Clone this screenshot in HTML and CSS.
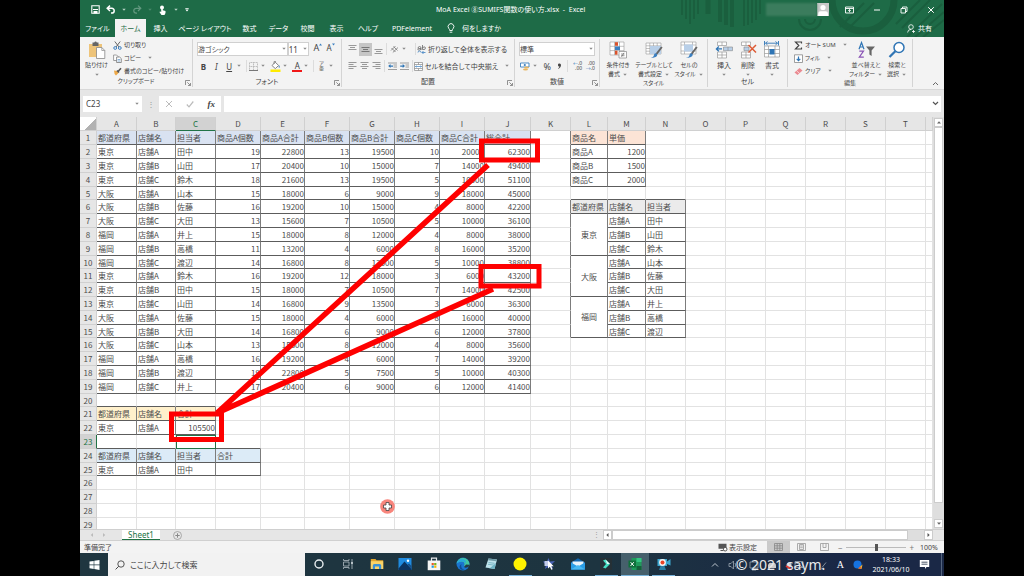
FILE: index.html
```html
<!DOCTYPE html>
<html lang="ja">
<head>
<meta charset="utf-8">
<title>MoA Excel ⑧SUMIFS関数の使い方.xlsx - Excel</title>
<link rel="stylesheet" href="styles.css">
</head>
<body>
<svg class="defs" aria-hidden="true">
  <symbol id="caret" viewBox="0 0 6 4"><path d="M1.3 .8h3.4L3 2.8z" fill="currentColor"/></symbol>
  <symbol id="launcher" viewBox="0 0 6 6"><path d="M.5 5V.5H5M2.3 2.3l3 3M5.5 3v2.5H3" fill="none" stroke="#777" stroke-width=".8"/></symbol>
</svg>
<div class="desktop">
  <div class="top">
  <svg class="pattern" viewBox="0 0 270 37" aria-hidden="true">
    <g stroke="#1a5f3e" stroke-width="2" fill="none">
      <path d="M8 0v15M12 0v19M16 0v24M20 0v19M24 0v14"/>
      <path d="M46 0v22M52 0v25M58 0v27" stroke-width="4"/><path d="M34 0v14" stroke-width="5"/>
      <path d="M70 0v26M74 0v25M78 0v23M82 0v20M86 0v14"/>
      <path d="M125 19a11 11 0 0 0 22 0M131 19a5 5 0 0 0 10 0"/>
      <path d="M158 0a31 31 0 0 0 62 0" stroke-width="7"/>
      <path d="M166 27 190 3M173 30 200 3M233 37 268 4M241 37 270 12M249 37 270 20M222 24 246 0M228 28 256 0"/>
    </g>
  </svg>
  <header class="titlebar">
    <div class="quick">
      <button aria-label="上書き保存"><svg width="9" height="9" viewBox="0 0 9 9"><path d="M.8.8h7.4v7.4H.8z" fill="none" stroke="#fff" stroke-width="1.1"/><path d="M2 4h5v1H2zM2.5 6h4v2.5h-4z" fill="#fff"/></svg></button>
      <button aria-label="元に戻す"><svg width="10" height="9" viewBox="0 0 10 9"><path d="M4 .6 1.2 3.3 4 6M1.5 3.3h4.3a2.3 2.3 0 0 1 0 4.8H5" fill="none" stroke="#fff" stroke-width="1.5"/></svg></button>
      <svg class="caret"><use href="#caret"/></svg>
      <button class="faded" aria-label="やり直し"><svg width="10" height="9" viewBox="0 0 10 9"><path d="M6 .6 8.8 3.3 6 6M8.5 3.3H4.2a2.3 2.3 0 0 0 0 4.8H5" fill="none" stroke="#fff" stroke-width="1.2"/></svg></button>
      <svg class="caret faded"><use href="#caret"/></svg>
      <button aria-label="タッチ/マウス モード"><svg width="9" height="10" viewBox="0 0 9 10"><circle cx="4" cy="2.4" r="2" fill="#fff"/><path d="M3.2 2.5h1.6v2.8l2.7.7v2L6.5 10h-3L1.4 7l.8-.6 1 .7z" fill="#fff"/></svg></button>
      <svg class="caret"><use href="#caret"/></svg>
      <button aria-label="クイック アクセス ツール バーのカスタマイズ"><svg width="6" height="6" viewBox="0 0 6 6"><path d="M1.3 1h3.4v.8H1.3zM1.3 2.6h3.4L3 4.6z" fill="#fff"/></svg></button>
    </div>
    <h1 class="doc-title">MoA Excel ⑧SUMIFS関数の使い方.xlsx&nbsp; -&nbsp; Excel</h1>
    <div class="account"><span class="account-name"></span>
      <svg width="12" height="13" viewBox="0 0 12 13"><path d="M0 0h12v13H0z" fill="#c9c9c9"/><circle cx="6" cy="4.5" r="2.6" fill="#fff"/><path d="M1 13V10.500q0-2.300 2.500-2.300h5Q11 8.200 11 10.500V13z" fill="#fff"/></svg></div>
    <div class="window-buttons">
      <button aria-label="リボンの表示オプション"><svg width="9" height="8" viewBox="0 0 9 8"><path d="M.5 1h8v6h-8zM.5 2.500h8M4.500 6.200V3.600M3.200 4.800l1.300-1.300 1.300 1.300" fill="none" stroke="#fff" stroke-width=".9"/></svg></button>
      <button aria-label="最小化"><svg width="8" height="8" viewBox="0 0 8 8"><path d="M1 4h6" stroke="#fff"/></svg></button>
      <button aria-label="元のサイズに戻す"><svg width="8" height="8" viewBox="0 0 8 8"><path d="M1 2.500h4.500V7H1zM2.500 2.500V1H7v4.500H5.500" fill="none" stroke="#fff" stroke-width=".9"/></svg></button>
      <button aria-label="閉じる"><svg width="8" height="8" viewBox="0 0 8 8"><path d="M1.200 1.200l5.600 5.600M6.800 1.200 1.200 6.800" stroke="#fff"/></svg></button>
    </div>
  </header>
  <nav class="tabs">
    <button class="tab tab-file">ファイル</button>
    <button class="tab tab-active">ホーム</button>
    <button class="tab">挿入</button>
    <button class="tab tab-layout">ページ レイアウト</button>
    <button class="tab">数式</button>
    <button class="tab">データ</button>
    <button class="tab">校閲</button>
    <button class="tab">表示</button>
    <button class="tab tab-help">ヘルプ</button>
    <button class="tab tab-pdf">PDFelement</button>
    <button class="tab tab-tell"><svg width="8" height="11" viewBox="0 0 8 11"><path d="M2.700 7.500Q2.700 6.300 1.700 5.300a2.900 2.900 0 1 1 4.600 0Q5.300 6.300 5.300 7.500zM2.700 9.200h2.600" fill="none" stroke="#fff" stroke-width=".9"/></svg>何をしますか</button>
    <button class="tab tab-share"><svg width="8" height="9" viewBox="0 0 8 9"><circle cx="4" cy="3" r="2.300" fill="none" stroke="#fff" stroke-width=".8"/><path d="M.6 8.500Q.8 5.400 4 5.400M5 7.500h3M6.500 6v3" fill="none" stroke="#fff" stroke-width=".8"/></svg>共有</button>
  </nav>
  </div>

  <section class="ribbon">
    <div class="group group-clip">
      <div class="group-body">
        <button class="big big-paste"><svg width="18" height="18" viewBox="0 0 18 18"><path d="M1 3h13v13H1z" fill="#eec47a"/><path d="M4.500 1.500h1.800a1.300 1.300 0 0 1 2.500 0h1.700V5h-6z" fill="#666"/><path d="M8.500 6.500h5.300l3 3v8H8.500z" fill="#fff" stroke="#888" stroke-width=".8"/><path d="M13.800 6.500v3h3" fill="none" stroke="#888" stroke-width=".7"/></svg><span>貼り付け</span><svg class="caret"><use href="#caret"/></svg></button>
        <div class="stack">
          <button class="line"><svg width="9" height="9" viewBox="0 0 9 9"><path d="M1.800.5 6 6M7.200.5 3 6" stroke="#666" stroke-width="1"/><circle cx="2.200" cy="7" r="1.400" fill="none" stroke="#3b7fc0"/><circle cx="6.800" cy="7" r="1.400" fill="none" stroke="#3b7fc0"/></svg>切り取り</button>
          <button class="line"><svg width="9" height="9" viewBox="0 0 9 9"><path d="M.6 1h3l1.500 1.500V6.500H.6z" fill="#fff" stroke="#888" stroke-width=".8"/><path d="M3.600 3h3L8.300 4.600V8.500H3.600z" fill="#fff" stroke="#777" stroke-width=".8"/><path d="M4.600 5.500h2.700M4.600 7h2.700" stroke="#3b7fc0" stroke-width=".6"/></svg>コピー<svg class="caret"><use href="#caret"/></svg></button>
          <button class="line"><svg width="9" height="9" viewBox="0 0 9 9"><path d="M1 3.500 4.500 4l1 2L3 8.500 1.600 7z" fill="#eda847"/><path d="M4 3.500 6 5.500M5 4.500 8 1.200" stroke="#555" stroke-width="1.600"/></svg>書式のコピー/貼り付け</button>
        </div>
      </div>
      <div class="group-label">クリップボード<svg class="launcher"><use href="#launcher"/></svg></div>
    </div>

    <div class="group group-font">
      <div class="group-body rows">
        <div class="row">
          <label class="combo combo-font"><select aria-label="フォント"><option>游ゴシック</option></select><svg class="caret"><use href="#caret"/></svg></label>
          <label class="combo combo-size"><select aria-label="フォント サイズ"><option>11</option></select><svg class="caret"><use href="#caret"/></svg></label>
          <button class="tool grow" aria-label="フォント サイズの拡大">A<svg width="3" height="3" viewBox="0 0 3 3"><path d="M0 2.500 1.500.5 3 2.500z" fill="#3b7fc0"/></svg></button>
          <button class="tool shrink" aria-label="フォント サイズの縮小">A<svg width="3" height="3" viewBox="0 0 3 3"><path d="M0 .5h3L1.500 2.500z" fill="#3b7fc0"/></svg></button>
        </div>
        <div class="row">
          <button class="tool"><b>B</b></button><button class="tool"><i>I</i></button><button class="tool"><u>U</u></button><svg class="caret"><use href="#caret"/></svg>
          <span class="sep"></span>
          <button class="tool" aria-label="罫線"><svg width="9" height="9" viewBox="0 0 9 9"><path d="M.5.5h8v8h-8zM4.500.5v8M.5 4.500h8" fill="none" stroke="#aaa" stroke-width=".8" stroke-dasharray="1 .6"/><path d="M0 8.500h9" stroke="#777"/></svg></button><svg class="caret"><use href="#caret"/></svg>
          <button class="tool" aria-label="塗りつぶしの色"><svg width="11" height="11" viewBox="0 0 11 11"><path d="M2 4.500 5.300 1.200 8.600 4.500 5.300 7.600z" fill="#fff" stroke="#777" stroke-width=".9"/><path d="M4 3V.6h2" fill="none" stroke="#777" stroke-width=".8"/><path d="M9 4q1.500 2 .3 3Q8 6.500 9 4z" fill="#3b7fc0"/><path d="M.5 8.500h10V11H.5z" fill="#ffeb00"/></svg></button><svg class="caret"><use href="#caret"/></svg>
          <button class="tool font-color">A</button><svg class="caret"><use href="#caret"/></svg>
          <span class="sep"></span>
          <button class="tool ruby"><span>ア</span><span>亜</span></button><svg class="caret"><use href="#caret"/></svg>
        </div>
      </div>
      <div class="group-label">フォント<svg class="launcher"><use href="#launcher"/></svg></div>
    </div>

    <div class="group group-align">
      <div class="group-body rows">
        <div class="row">
          <button class="tool" aria-label="上揃え"><svg width="9" height="9" viewBox="0 0 9 9"><path d="M.5 .5h8M2 2.500h5M.5 4.500h8" stroke="#999"/></svg></button>
          <button class="tool pressed" aria-label="上下中央揃え"><svg width="9" height="9" viewBox="0 0 9 9"><path d="M.5 2.500h8M2 4.500h5M.5 6.500h8" stroke="#777"/></svg></button>
          <button class="tool" aria-label="下揃え"><svg width="9" height="9" viewBox="0 0 9 9"><path d="M.5 4.500h8M2 6.500h5M.5 8.500h8" stroke="#999"/></svg></button>
          <span class="sep"></span>
          <button class="tool" aria-label="方向"><svg width="9" height="9" viewBox="0 0 9 9"><path d="M1 5.500 5.500 1M2.800 7.500 8 2.500M1.500 3l4 4M3.500 1.500l4 4" fill="none" stroke="#777" stroke-width=".8"/></svg></button><svg class="caret"><use href="#caret"/></svg>
          <span class="sep sep-wrap"></span>
          <button class="line"><svg width="9" height="9" viewBox="0 0 9 9"><path d="M1 3.500q0-2 1.500-2T4 3v2M4 3.500H2Q.9 3.600.9 4.500T2.500 5 4 4M5.500 0v4.500q3 .5 3-1.500T5.500 2.500" fill="none" stroke="#666" stroke-width=".8"/><path d="M1 7.500q0-1.500 1.500-1.500t1.500 1.500M5 7.500h3.500M6.500 6 5 7.500 6.500 9" fill="none" stroke="#3b7fc0" stroke-width=".8"/></svg>折り返して全体を表示する</button>
        </div>
        <div class="row">
          <button class="tool" aria-label="左揃え"><svg width="9" height="9" viewBox="0 0 9 9"><path d="M.5 .5h8M.5 2.500h5M.5 4.500h8M.5 6.500h5" stroke="#999"/></svg></button>
          <button class="tool" aria-label="中央揃え"><svg width="9" height="9" viewBox="0 0 9 9"><path d="M.5 .5h8M2 2.500h5M.5 4.500h8M2 6.500h5" stroke="#999"/></svg></button>
          <button class="tool" aria-label="右揃え"><svg width="9" height="9" viewBox="0 0 9 9"><path d="M.5 .5h8M3.500 2.500h5M.5 4.500h8M3.500 6.500h5" stroke="#999"/></svg></button>
          <span class="sep"></span>
          <button class="tool" aria-label="インデントを減らす"><svg width="9" height="9" viewBox="0 0 9 9"><path d="M0 1h9M5.500 3h3.500M5.500 5h3.500M0 7.500h9" stroke="#888" stroke-width=".8"/><path d="M.2 4 2.500 2v1.400H5v1.300H2.500V6z" fill="#2f75b5"/></svg></button>
          <button class="tool" aria-label="インデントを増やす"><svg width="9" height="9" viewBox="0 0 9 9"><path d="M0 1h9M5.500 3h3.500M5.500 5h3.500M0 7.500h9" stroke="#888" stroke-width=".8"/><path d="M5 4 2.700 2v1.400H.2v1.300h2.500V6z" fill="#2f75b5"/></svg></button>
          <span class="sep"></span>
          <button class="line"><svg width="9" height="9" viewBox="0 0 9 9"><path d="M.5.500h8v8h-8zM.5 2.500h8M.5 6.500h8M4.500.500v2M4.500 6.500v2" fill="#fff" stroke="#888" stroke-width=".7"/><path d="M1.500 4.500h6M2.500 3.600l-1 .9 1 .9M6.500 3.600l1 .9-1 .9" fill="none" stroke="#3b7fc0" stroke-width=".7"/></svg>セルを結合して中央揃え<svg class="caret"><use href="#caret"/></svg></button>
        </div>
      </div>
      <div class="group-label">配置<svg class="launcher"><use href="#launcher"/></svg></div>
    </div>

    <div class="group group-number">
      <div class="group-body rows">
        <div class="row">
          <label class="combo combo-number"><select aria-label="表示形式"><option>標準</option></select><svg class="caret"><use href="#caret"/></svg></label>
        </div>
        <div class="row">
          <button class="tool" aria-label="通貨表示形式"><svg width="10" height="9" viewBox="0 0 10 9"><path d="M.5 1h8.500v4H.5z" fill="#fff" stroke="#3b7fc0" stroke-width=".9"/><circle cx="4.800" cy="3" r="1.100" fill="#3b7fc0"/><ellipse cx="6.500" cy="5.500" rx="2.500" ry="1" fill="#e8b560"/><ellipse cx="5.500" cy="7.500" rx="2.500" ry="1" fill="#e8b560"/></svg></button><svg class="caret"><use href="#caret"/></svg>
          <button class="tool percent">%</button>
          <button class="tool" aria-label="桁区切りスタイル"><svg width="5" height="7" viewBox="0 0 5 7"><path d="M2.500.6a1.500 1.500 0 0 1 1.500 1.600Q4 4.800 1.500 6l-.3-.6Q2.300 4.600 2.400 3.600A1.500 1.500 0 0 1 2.500.6z" fill="#444"/></svg></button>
          <span class="sep"></span>
          <button class="tool decimal" aria-label="小数点以下の表示桁数を増やす"><span><em>←</em>.0</span><span>.00</span></button>
          <button class="tool decimal" aria-label="小数点以下の表示桁数を減らす"><span>.00</span><span><em>→</em>.0</span></button>
        </div>
      </div>
      <div class="group-label">数値<svg class="launcher"><use href="#launcher"/></svg></div>
    </div>

    <div class="group group-styles">
      <div class="group-body">
        <button class="big big-cond"><svg width="18" height="18" viewBox="0 0 18 18"><path d="M1 1h14v13H1zM1 5.300h14M1 9.600h14M5.500 1v13M10.500 1v13" fill="#fff" stroke="#999" stroke-width=".6"/><path d="M6 1.200h3v3.600H6z" fill="#d9532c"/><path d="M6 5.500h5v3.600H6z" fill="#3b7fc0"/><path d="M6 9.700h2.500v4H6z" fill="#d9532c"/><path d="M10 10.500h7.500v6.500H10z" fill="#fff" stroke="#888" stroke-width=".7"/><path d="M12 13h3.500M12 14.700h3.500M15 11.800l-2.500 4" stroke="#555" stroke-width=".6"/></svg><span>条件付き</span><span>書式 <svg class="caret"><use href="#caret"/></svg></span></button>
        <button class="big big-table"><svg width="18" height="18" viewBox="0 0 18 18"><path d="M1 2h15v11H1zM1 4.800h15M1 7.500h15M1 10.200h15M4.800 2v11M8.500 2v11M12.200 2v11" fill="#fff" stroke="#999" stroke-width=".6"/><path d="M5 5h11v8H5z" fill="#b8cfe8"/><path d="M16.800 6 11.500 13" stroke="#666" stroke-width="2"/><path d="M4.500 17q4 0 4.500-3t3.200-.8Q13 17 4.500 17z" fill="#3b7fc0"/></svg><span>テーブルとして</span><span>書式設定 <svg class="caret"><use href="#caret"/></svg></span></button>
        <button class="big big-style"><svg width="18" height="18" viewBox="0 0 18 18"><path d="M1 1h15v12H1zM1 4h15M1 10h15M4.500 1v12M12.500 1v12" fill="#fff" stroke="#999" stroke-width=".6"/><path d="M4 3.500h9v7H4z" fill="#b8cfe8"/><path d="M16.800 6 11.500 13" stroke="#666" stroke-width="2"/><path d="M5 17q4 0 4.500-3t3.200-.8Q13 17 5 17z" fill="#3b7fc0"/></svg><span>セルの</span><span>スタイル <svg class="caret"><use href="#caret"/></svg></span></button>
      </div>
      <div class="group-label">スタイル</div>
    </div>

    <div class="group group-cells">
      <div class="group-body">
        <button class="big big-cell"><svg width="18" height="18" viewBox="0 0 18 18"><path d="M2.500 1h9v3.500h-9zM7 1v3.500M2.500 11h9v6h-9zM7 11v6M2.500 14h9" fill="#fff" stroke="#999" stroke-width=".7"/><path d="M8.500 6h9v3.700h-9z" fill="#b8cfe8" stroke="#888" stroke-width=".6"/><path d="M13 6v3.700" stroke="#888" stroke-width=".6"/><path d="M7 7.900H1.500M3.800 5.500 1.400 7.900l2.400 2.400" fill="none" stroke="#2f75b5" stroke-width="1.300"/></svg><span>挿入</span><svg class="caret"><use href="#caret"/></svg></button>
        <button class="big big-cell"><svg width="18" height="18" viewBox="0 0 18 18"><path d="M2.500 1h9v3.500h-9zM7 1v3.500M2.500 11h9v6h-9zM7 11v6M2.500 14h9" fill="#fff" stroke="#999" stroke-width=".7"/><path d="M5 6h5v3.700H5z" fill="#b8cfe8" stroke="#888" stroke-width=".6"/><path d="M9.500 4l7.500 7.500M17 4l-7.500 7.500" stroke="#dd5a35" stroke-width="1.500"/></svg><span>削除</span><svg class="caret"><use href="#caret"/></svg></button>
        <button class="big big-cell"><svg width="18" height="18" viewBox="0 0 18 18"><path d="M1.500 5h15v11h-15zM1.500 8.500h15M1.500 12.500h15M5.500 5v11M12 5v11" fill="#fff" stroke="#999" stroke-width=".7"/><path d="M6.500 8h5v5.500h-5z" fill="#2f75b5"/><path d="M2.500 2.200h12M4.500.5 2.500 2.200l2 1.700M12.500.5l2 1.700-2 1.700M1.500 0v4.500M15.500 0v4.500" fill="none" stroke="#2f75b5" stroke-width=".9"/></svg><span>書式</span><svg class="caret"><use href="#caret"/></svg></button>
      </div>
      <div class="group-label">セル</div>
    </div>

    <div class="group group-edit">
      <div class="group-body">
        <div class="stack">
          <button class="line"><svg width="9" height="9" viewBox="0 0 9 9"><path d="M7.500 2.500V1H1.500L4.800 4.500 1.500 8h6V6.500" fill="none" stroke="#444" stroke-width="1.200"/></svg>オート SUM<svg class="caret"><use href="#caret"/></svg></button>
          <button class="line"><svg width="9" height="9" viewBox="0 0 9 9"><path d="M.5.8h8v7.700h-8z" fill="#fff" stroke="#888" stroke-width=".8"/><path d="M4.500 2.500v4M2.700 4.800l1.800 1.900 1.800-1.900" fill="none" stroke="#2f75b5" stroke-width="1.200"/></svg>フィル<svg class="caret"><use href="#caret"/></svg></button>
          <button class="line"><svg width="9" height="9" viewBox="0 0 9 9"><path d="M.5 5.500 5.500 1 8.500 3.500 3.500 8z" fill="#ea8b92"/><path d="M2.500 3.700l3 2.700" stroke="#fff" stroke-width=".6"/></svg>クリア<svg class="caret"><use href="#caret"/></svg></button>
        </div>
        <button class="big big-sort"><svg width="18" height="18" viewBox="0 0 18 18"><path d="M2 8.200 4.500 1.500 7 8.200M2.900 6h3.200" fill="none" stroke="#2f75b5" stroke-width="1.200"/><path d="M2.300 10.200h4.200L2.300 16.200h4.500" fill="none" stroke="#8a54b5" stroke-width="1.200"/><path d="M9 5.500h9l-3.400 4V15l-2.200-1.500v-4z" fill="#666"/></svg><span>並べ替えと</span><span>フィルター <svg class="caret"><use href="#caret"/></svg></span></button>
        <button class="big big-find"><svg width="18" height="18" viewBox="0 0 18 18"><circle cx="11" cy="6.500" r="5" fill="#fff" stroke="#2f75b5" stroke-width="1.500"/><path d="M7.300 10.200 1.500 16" stroke="#2f75b5" stroke-width="2.300"/></svg><span>検索と</span><span>選択 <svg class="caret"><use href="#caret"/></svg></span></button>
      </div>
      <div class="group-label">編集</div>
    </div>
    <button class="collapse" aria-label="リボンを折りたたむ"><svg width="7" height="5" viewBox="0 0 7 5"><path d="M1 4l2.500-2.500L6 4" fill="none" stroke="#666"/></svg></button>
  </section>

  <section class="formula-bar">
    <label class="name-box"><input aria-label="名前ボックス" value="C23"><svg class="caret"><use href="#caret"/></svg></label>
    <span class="grip">⋮</span>
    <div class="formula-tools">
      <svg width="8" height="8" viewBox="0 0 8 8"><path d="M1 1l6 6M7 1 1 7" stroke="#bbb"/></svg>
      <svg width="8" height="8" viewBox="0 0 8 8"><path d="M.8 4.500 3 6.800 7.300 1.500" fill="none" stroke="#bbb" stroke-width="1.200"/></svg>
      <button aria-label="関数の挿入"><i>fx</i></button>
    </div>
    <label class="formula"><input aria-label="数式バー"><svg width="7" height="5" viewBox="0 0 7 5"><path d="M1 1l2.500 2.500L6 1" fill="none" stroke="#555" stroke-width="1.200"/></svg></label>
  </section>

  <main class="sheet">
    <div class="grid-area">
      <table class="grid" id="grid"></table>
      <svg class="ink" width="600" height="412" viewBox="0 117 600 412" aria-hidden="true">
        <g fill="none" stroke="#fe0000" stroke-width="5">
          <path d="M401.500 141h56v19h-56zM401 266.500h58v19.500h-58zM91.500 414h50v25.500h-50z"/>
          <path d="M137 413 408 165M137 413 413 289" stroke-width="5.500"/>
        </g>
        <circle cx="307.500" cy="506.500" r="7.300" fill="#f8857c"/>
        <path d="M306 502.500h3v2.500h2.500v3H309v2.500h-3V508h-2.500v-3h2.500z" fill="#fff" stroke="#444" stroke-width=".8"/>
      </svg>
    </div>
    <div class="vscroll">
      <button aria-label="上へ"><svg width="6" height="5" viewBox="0 0 6 5"><path d="M1 3.500h4L3 1.300z" fill="#666"/></svg></button>
      <span class="vthumb"></span>
      <button aria-label="下へ"><svg width="6" height="5" viewBox="0 0 6 5"><path d="M1 1.500h4L3 3.700z" fill="#666"/></svg></button>
    </div>
  </main>

  <div class="sheet-tabs">
    <div class="sheet-nav">
      <svg width="4" height="6" viewBox="0 0 4 6"><path d="M3 1v4L.8 3z" fill="#bbb"/></svg>
      <svg width="4" height="6" viewBox="0 0 4 6"><path d="M1 1v4l2.200-2z" fill="#bbb"/></svg>
    </div>
    <button class="sheet-tab">Sheet1</button>
    <button class="add-sheet" aria-label="新しいシート"><svg width="9" height="9" viewBox="0 0 9 9"><path d="M4.500 2.300v4.400M2.300 4.500h4.400" stroke="#888"/><circle cx="4.500" cy="4.500" r="4" fill="none" stroke="#999" stroke-width=".8"/></svg></button>
    <span class="grip">⋮</span>
    <div class="hscroll">
      <button aria-label="左へ"><svg width="5" height="6" viewBox="0 0 5 6"><path d="M3.500 1v4L1.300 3z" fill="#555"/></svg></button>
      <span class="hthumb"></span>
      <button aria-label="右へ"><svg width="5" height="6" viewBox="0 0 5 6"><path d="M1.500 1v4l2.200-2z" fill="#555"/></svg></button>
    </div>
  </div>

  <footer class="status">
    <span class="status-text">準備完了</span>
    <button class="display"><svg width="10" height="9" viewBox="0 0 10 9"><path d="M.5.800h8v5h-8zM2.500 7h3v1h-3z" fill="#555"/><circle cx="7.200" cy="6.200" r="1.800" fill="#fff" stroke="#555"/></svg>表示設定</button>
    <div class="views">
      <button class="view view-active" aria-label="標準"><svg width="9" height="8" viewBox="0 0 9 8"><path d="M.5.5h8v7h-8zM.5 2.800h8M.5 5.200h8M3.200.5v7M5.800.5v7" fill="none" stroke="#888" stroke-width=".8"/></svg></button>
      <button class="view" aria-label="ページ レイアウト"><svg width="9" height="8" viewBox="0 0 9 8"><path d="M.5.500h8v7h-8zM2.500 1.500h4v5h-4zM3.200 3h2.600M3.200 4.700h2.600" fill="none" stroke="#999" stroke-width=".8"/></svg></button>
      <button class="view" aria-label="改ページ プレビュー"><svg width="9" height="8" viewBox="0 0 9 8"><path d="M.5.500h8v7h-8zM3 .5v4h3v-4" fill="none" stroke="#999" stroke-width=".8"/></svg></button>
    </div>
    <div class="zoom"><span>−</span><input type="range" aria-label="ズーム" min="0" max="100" value="50"><span>+</span></div>
    <span class="zoom-value">100%</span>
  </footer>

  <footer class="taskbar">
    <button class="start" aria-label="スタート"><svg width="11" height="10" viewBox="0 0 11 10"><path d="M.5 1.500 4.700.9v3.700H.5zM5.300.8 10.500 0v4.600H5.300zM.5 5.200h4.200v3.700L.5 8.300zM5.300 5.200h5.200V10L5.300 9z" fill="#fff"/></svg></button>
    <label class="search"><svg width="10" height="10" viewBox="0 0 10 10"><circle cx="6" cy="4" r="3.200" fill="none" stroke="#444" stroke-width=".9"/><path d="M3.700 6.300.6 9.400" stroke="#444"/></svg><input aria-label="検索" placeholder="ここに入力して検索"></label>
    <div class="apps">
      <button aria-label="Cortana"><svg width="14" height="14" viewBox="0 0 14 14"><circle cx="7" cy="7" r="4" fill="none" stroke="#e8edf0" stroke-width="1.400"/></svg></button>
      <button aria-label="タスク ビュー"><svg width="14" height="14" viewBox="0 0 14 14"><path d="M2.500 5h5.500v4H2.500zM2.500 2v1.500h5.500V2M2.500 12v-1.500h5.500V12M11 2v10" fill="none" stroke="#9fadb4" stroke-width=".9"/><path d="M10.200 5h1.600v2h-1.600z" fill="#cfd8dc"/></svg></button>
      <button aria-label="エクスプローラー"><svg width="14" height="14" viewBox="0 0 14 14"><path d="M.8 2h4.700l1 1.200h6.700V12H.8z" fill="#e2a52c"/><path d="M.8 4.200h12.400V12H.8z" fill="#fbd368"/><path d="M2.800 12V8.500Q2.800 7 4.300 7h5.400q1.500 0 1.500 1.500V12H9V9.500H5V12z" fill="#3c92d6"/></svg></button>
      <button aria-label="フォト"><svg width="14" height="14" viewBox="0 0 14 14"><path d="M.5 1h13v12H.5z" fill="#1f8be0"/><path d="M.5 13V11.500L6.500 4.500 13.500 12v1z" fill="#0c3461"/><path d="M9.500 7.800 11 6.500l2.500 2.500v3z" fill="#174f88"/><circle cx="10" cy="3.800" r="1.200" fill="#fff"/></svg></button>
      <button aria-label="Microsoft Store"><svg width="14" height="14" viewBox="0 0 14 14"><path d="M4.500 4V1.200h5V4" fill="none" stroke="#e8eaec" stroke-width="1.200"/><path d="M.7 3.500h12.600v9.700H.7z" fill="#f5f5f5"/><path d="M4.600 6h2.200v2.200H4.600z" fill="#e85a28"/><path d="M7.200 6h2.200v2.200H7.200z" fill="#79b51c"/><path d="M4.600 8.600h2.200v2.200H4.600z" fill="#1e9de0"/><path d="M7.200 8.600h2.200v2.200H7.200z" fill="#f7b500"/></svg></button>
      <button aria-label="Microsoft Edge"><svg width="14" height="14" viewBox="0 0 14 14"><circle cx="7" cy="7" r="6.500" fill="#1a74cf"/><path d="M.6 6.500A6.500 6.500 0 0 1 13.500 7q0 3-3.500 3-2.500 0-1.500-2.500.3-3-3-3T.6 6.500z" fill="#42c6a0"/><path d="M.6 6.500Q1.500 2.500 6.500 2q4 .5 3.500 4.500Q8.500 4 5.500 4.500T.6 6.500z" fill="#27a9dd"/><path d="M5.500 7q-1.500 4 3 6-5 .5-5-3.500Q4 7.500 5.500 7z" fill="#0f4d96"/><path d="M13 9.500q-3 2-5 .5l2-2.500 3.600.2z" fill="#243a44"/></svg></button>
      <button aria-label="メモ帳"><svg width="14" height="14" viewBox="0 0 14 14"><path d="M4.500 1.500 13 2.500 10.500 12 1.500 10.500z" fill="#bfe3ec"/><path d="M4.500 1.500 13 2.500l-.5 1.700L4 3.200z" fill="#6e99a5"/><path d="M4.500 5.500l6 .8M4 7.300l6 .8" stroke="#5ea6b9" stroke-width=".7"/><path d="M1.500 10.500 10.500 12l1.500-6-6 5z" fill="#6fb4c5"/></svg></button>
      <button class="running" aria-label="マーカー"><svg width="14" height="14" viewBox="0 0 14 14"><circle cx="7" cy="7" r="6.500" fill="#fff200"/></svg></button>
      <button aria-label="ポインター"><svg width="14" height="14" viewBox="0 0 14 14"><path d="M6.500 1 8 4.500l5-.5-3.500 3.500L11 12 7 9.500 3 12l1-4L.8 4.500l4 .2z" fill="#4a63b8"/><path d="M2.500 4h4v5h-4z" fill="#c3cdec"/><path d="M6 3.500v8l1.900-1.700 1.400 3 1.300-.6-1.400-2.900h2.500z" fill="#fff"/></svg></button>
      <button aria-label="メール"><svg width="14" height="14" viewBox="0 0 14 14"><path d="M0 5.500 7 1.200 14 5.500V12.500H0z" fill="#1167b1"/><path d="M1.500 4.500h11v5h-11z" fill="#e7f3fb"/><path d="M0 5.500 7 9.500 14 5.500v7H0z" fill="#2a9de6"/><path d="M0 12.500 7 8l7 4.500z" fill="#48b8f2"/></svg></button>
      <button class="running" aria-label="Filmora"><svg width="14" height="14" viewBox="0 0 14 14"><path d="M1 1h12v12H1z" fill="#253036"/><path d="M4 3.500 6.500 2.500 11 7l-4.500 4.500L4 10.500 7 7z" fill="#46dfc2"/><path d="M6.500 2.500 11 7H8z" fill="#e3fff9"/></svg></button>
      <button class="running focused" aria-label="Excel"><svg width="14" height="14" viewBox="0 0 14 14"><path d="M3.500 1h10v12h-10z" fill="#1f9a5b"/><path d="M8.500 1h5v4h-5z" fill="#33c481"/><path d="M8.500 9h5v4h-5z" fill="#14613a"/><path d="M.5 3.500h7.500v7H.5z" fill="#0f703b"/><path d="M2.600 5.200l3.200 3.700M5.800 5.200 2.600 8.900" stroke="#fff"/></svg></button>
      <button class="running" aria-label="画面録画"><svg width="14" height="14" viewBox="0 0 14 14"><path d="M.5 2h9.500v7H.5zM10 4.500 13.500 2v6.500L10 7z" fill="#3ca7d0"/><path d="M3.500 9h4l1.500 4H2z" fill="#2a7fa5"/><circle cx="5.500" cy="5.500" r="3.400" fill="#f3f3f3"/><circle cx="5.500" cy="5.500" r="2" fill="#ea4426"/></svg></button>
    </div>
    <div class="tray">
      <svg width="8" height="8" viewBox="0 0 8 8"><path d="M1 5.500l3-3 3 3" fill="none" stroke="#cfd6dc" stroke-width=".9"/></svg>
      <div class="tray-icons">
        <svg width="100" height="14" viewBox="0 0 100 14"><g fill="none" stroke="#8f9ba6" stroke-width=".9"><path d="M1 5.500h2L5.500 3v8L3 8.500H1zM7 5q1.500 2 0 4M8.700 3.500q2.500 3.500 0 7M22 4h8v6h-8zM24 12h4M67 3.500h8v6h-8zM67 3.500l8 6M94 9.500l4-5M93 11l3-1"/></g><path d="M40 7q1-3 4-2 4-1 4 3v2h-8z" fill="#ccc"/><circle cx="61" cy="7" r="2.500" fill="#ccc"/><path d="M58 8l5 3" stroke="#e23b35" stroke-width="2"/></svg>
        <span class="watermark">© 2021 saym.</span>
      </div>
      <span class="ime">A</span>
      <svg width="10" height="10" viewBox="0 0 10 10"><circle cx="4.500" cy="4.500" r="4" fill="#1673e0"/><path d="M5 8.500 9.500 4.500 8.500 9z" fill="#f2b632"/><path d="M5.500 8.500h3L7 6.500z" fill="#e8492f"/></svg>
      <time class="clock"><span>18:33</span><span>2021/06/10</span></time>
      <button class="notice" aria-label="通知"><svg width="11" height="11" viewBox="0 0 11 11"><path d="M.8 1h9.400v7H7.500L6 10V8H.8z" fill="#fff"/><path d="M2.500 3.200h6M2.500 5.200h6" stroke="#1c2c42" stroke-width=".8"/></svg></button>
    </div>
  </footer>
</div>
<script src="sheet.js"></script>
</body>
</html>
```

FILE: styles.css
```css
* { box-sizing: border-box; }
body {
  margin: 0;
  background: #000;
  font-family: "Noto Sans", "Noto Sans CJK JP", sans-serif;
  font-size: 7px;
  line-height: 9px;
  color: #444;
}
button, input, select { font: inherit; color: inherit; border: 0; padding: 0; margin: 0; background: none; border-radius: 0; outline: 0; }
svg { flex: none; display: block; }
.defs { position: absolute; width: 0; height: 0; }
.desktop {
  margin: 0 80px;
  height: 100vh;
  display: flex;
  flex-direction: column;
  overflow: hidden;
  background: #e6e6e6;
  font-feature-settings: "palt";
}
.caret { width: 6px; height: 4px; color: #888; }
.faded { opacity: .3; }

/* title bar */
.top { position: relative; background: #1e6b47; color: #fff; }
.titlebar {
  position: relative;
  display: flex;
  align-items: center;
  height: 19px;
}
.titlebar .caret { color: #b9d3c6; }
.pattern { position: absolute; right: 0; top: 0; width: 270px; height: 37px; }
.quick { display: flex; align-items: center; gap: 5px; padding-left: 11px; width: 320px; }
.quick button { min-width: 10px; }
.doc-title { margin: 0; flex: 1; padding-left: 36px; font-size: 7px; font-weight: 400; white-space: nowrap; }
.account { position: relative; display: flex; align-items: center; }
.account-name { width: 51px; height: 13px; background: #3b7c5d; filter: blur(1px); }
.window-buttons { position: relative; display: flex; padding-left: 7px; }
.window-buttons button { width: 27px; display: flex; justify-content: center; }

/* ribbon tabs */
.tabs { position: relative; display: flex; height: 18px; }
.tab { min-width: 29px; white-space: nowrap; }
.tab-file { min-width: 35px; }
.tab-active { min-width: 31px; background: #f3f3f3; color: #1e6b47; }
.tab-layout { min-width: 60px; }
.tab-help { min-width: 34px; }
.tab-pdf { min-width: 54px; }
.tab-tell, .tab-share { display: flex; align-items: center; gap: 7px; padding-left: 8px; }
.tab-share { margin-left: auto; gap: 3px; padding: 0 12px 0 0; }

/* ribbon */
.ribbon { display: flex; height: 53px; background: #f3f3f3; border-bottom: 1px solid #d8d8d8; }
.group { display: flex; flex-direction: column; border-right: 1px solid #d4d4d4; margin: 2px 0; flex: none; white-space: nowrap; }
.group-body { display: flex; flex: 1; }
.rows { flex-direction: column; gap: 3px; padding: 3px 4px 0; }
.row { display: flex; align-items: center; height: 14px; }
.group-label { position: relative; height: 10px; text-align: center; }
.launcher { position: absolute; right: 1px; top: 3px; width: 6px; height: 6px; }
.group-clip { width: 113px; font-size: 6px; }
.group-font { width: 149px; }
.group-align { width: 173px; }
.group-number { width: 85px; }
.group-styles { width: 108px; font-size: 6px; }
.group-cells { width: 80px; }
.group-edit { width: 125px; font-size: 6px; }
.stack { display: flex; flex-direction: column; gap: 3px; padding-top: 1px; }
.line { display: flex; align-items: center; gap: 2px; height: 10px; white-space: nowrap; }
.line .caret { margin-left: 4px; }
.big { display: flex; flex-direction: column; align-items: center; padding-top: 2px; }
.big > svg:first-child { margin-bottom: 2px; }
.big > .caret { margin-top: 3px; }
.big span { display: flex; align-items: center; gap: 2px; white-space: nowrap; }
.big-paste { width: 33px; }
.big-cond { width: 36px; }
.big-table { width: 36px; }
.big-style { width: 34px; }
.big-cell { width: 24px; }
.group-cells .group-body { padding-left: 4px; }
.group-edit .group-body { padding-left: 6px; }
.group-edit .stack { width: 56px; }
.big-sort { width: 32px; }
.big-find { width: 30px; }
.tool { display: flex; justify-content: center; align-items: center; width: 13px; height: 13px; font-size: 8px; }
.pressed { background: #c6c6c6; }
.row > .caret { margin-right: 3px; }
.sep { width: 1px; height: 12px; background: #dcdcdc; margin: 0 1px; }
.sep-wrap { margin-left: 5px; }
.combo { display: flex; align-items: center; background: #fff; border: 1px solid #d0d0d0; height: 14px; }
.combo select { flex: 1; min-width: 0; appearance: none; font-size: 7px; line-height: 11px; height: 12px; }
.combo-font { width: 92px; }
.combo-size { width: 22px; margin-right: 2px; }
.combo-size select { font-size: 8px; }
.combo-number { width: 76px; }
.grow, .shrink { align-items: flex-start; font-size: 9px; }
.shrink { font-size: 8px; }
.font-color { height: 11px; border-bottom: 2px solid #f01818; width: 10px; margin: 0 1px; }
.ruby { flex-direction: column; font-size: 5px; line-height: 5px; }
.percent { font-size: 9px; }
.decimal { flex-direction: column; align-items: flex-end; font-size: 5px; line-height: 5px; }
.decimal em { font-style: normal; color: #2f75b5; }
.collapse { margin-left: auto; align-self: flex-end; padding: 0 5px 3px 0; }

/* formula bar */
.formula-bar { display: flex; align-items: center; height: 27px; padding: 0 3px; font-size: 8px; }
.formula-bar input { width: 100%; height: 15px; padding-left: 3px; }
.name-box, .formula, .formula-tools { display: flex; align-items: center; height: 16px; background: #fff; padding-right: 2px; }
.name-box { width: 59px; }
.grip { width: 17px; text-align: center; color: #999; }
.formula-tools { width: 62px; padding: 0 6px; justify-content: space-between; }
.formula { flex: 1; margin-left: 3px; }
.formula-tools i { font-family: "Liberation Serif", serif; font-size: 9px; font-weight: 700; }

/* worksheet */
.sheet { display: flex; flex: 1; min-height: 0; }
.grid-area { position: relative; flex: 1; min-width: 0; overflow: hidden; background: #fff; }
.grid {
  width: 100%;
  table-layout: fixed;
  border-collapse: separate;
  border-spacing: 0;
  font-family: "Noto Sans CJK JP", sans-serif;
  font-size: 8px;
  line-height: 12px;
  font-feature-settings: normal;
  color: #4c4c4c;
}
.grid th, .grid td {
  height: 14px;
  padding: 0 1px;
  border: solid #e2e2e2;
  border-width: 0 1px 1px 0;
  white-space: nowrap;
  overflow: hidden;
  text-align: left;
}
.grid tbody tr:nth-child(5n) > * { height: 13px; line-height: 11px; }
.grid th { background: #e6e6e6; font-weight: 400; text-align: center; border-color: #d0d0d0; }
.grid .corner { background: linear-gradient(135deg, transparent 62%, #b2b2b2 62%); }
.grid .selected { background: #d2d2d2; color: #217346; }
.grid thead .selected { border-bottom-color: #217346; }
.grid tbody .selected { border-right-color: #217346; }
.grid .num { text-align: right; padding: 0; }
.grid .merged { text-align: center; }
.grid .line-right { border-right-color: #7c7c7c; }
.grid .line-bottom { border-bottom-color: #5c5c5c; }
.grid .blue { background: #d9e2f1; }
.grid .orange { background: #fce4d6; }
.grid .gray { background: #ebebeb; }
.grid .yellow { background: #fff0cb; }
.grid .sky { background: #dcebf7; }
.grid .active { border-right: 1px solid #217346; border-bottom: 1px solid #217346; box-shadow: inset 1px 1px #217346; }
.col-head { width: 17px; }
.w37 { width: 37px; }
.w38 { width: 38px; }
.w39 { width: 39px; }
.w40 { width: 40px; }
.w44 { width: 44px; }
.w45 { width: 45px; }
.w46 { width: 46px; }
.ink { position: absolute; left: 0; top: 0; }
.vscroll { display: flex; flex-direction: column; width: 11px; padding: 1px; background: #dedede; }
.vscroll button { height: 9px; display: flex; align-items: center; justify-content: center; background: #fff; border: 1px solid #ccc; }
.vthumb { flex: 1; background: #fff; border: 1px solid #ccc; margin-bottom: 16px; }

/* sheet tabs */
.sheet-tabs { display: flex; height: 12px; border-top: 1px solid #cfcfcf; border-bottom: 1px solid #d0d0d0; }
.sheet-nav { display: flex; align-items: center; gap: 8px; width: 42px; padding-left: 10px; }
.sheet-tab { width: 38px; background: #fff; color: #217346; font-size: 8px; border-bottom: 1px solid #217346; }
.add-sheet { margin-left: 13px; }
.sheet-tabs .grip { margin-left: auto; width: 13px; }
.hscroll { display: flex; flex: 0 1 330px; background: #dedede; margin-right: 11px; }
.hscroll button { width: 9px; display: flex; align-items: center; justify-content: center; background: #fff; border: 1px solid #ccc; }
.hthumb { flex: 1; background: #fff; border: 1px solid #ccc; margin-right: 16px; }

/* status bar */
.status { display: flex; align-items: center; height: 12px; padding: 0 4px; background: #f3f3f3; }
.status-text { flex: 1; }
.display { display: flex; align-items: center; gap: 1px; margin-right: 10px; }
.views { display: flex; align-self: stretch; }
.view { width: 23px; display: flex; align-items: center; justify-content: center; }
.view-active { background: #cacaca; }
.zoom { display: flex; align-items: center; gap: 3px; width: 76px; margin-left: 2px; font-size: 8px; color: #777; }
.zoom input { flex: 1; min-width: 0; height: 9px; appearance: none; background: linear-gradient(#bbb, #bbb) center / 100% 1px no-repeat; }
.zoom input::-webkit-slider-thumb { appearance: none; width: 3px; height: 7px; background: #555; }
.zoom-value { margin-left: 6px; width: 20px; }

/* taskbar */
.taskbar { display: flex; height: 23px; background: linear-gradient(90deg, #1f3640, #1d3440 60%, #1a2846 88%); color: #fff; }
.start { width: 28px; display: flex; align-items: center; justify-content: center; }
.search { display: flex; align-items: center; gap: 5px; width: 197px; padding-left: 7px; background: #f2f2f2; color: #444; }
.search input { flex: 1; min-width: 0; font-size: 8px; }
.search input::placeholder { color: #444; opacity: 1; }
.apps { display: flex; flex: 0 1 373px; }
.apps button { flex: 1; display: flex; align-items: center; justify-content: center; margin: 0 3px; border-bottom: 1px solid transparent; }
.apps .running { border-bottom-color: #79b4dc; }
.apps .focused { margin: 0; padding: 0 3px; background: #46606c; }
.tray { display: flex; flex: 1; align-items: center; justify-content: flex-end; gap: 9px; border-right: 1px solid #53637d; margin-right: 2px; }
.tray-icons { position: relative; }
.watermark { position: absolute; left: 8px; top: -3px; font-size: 14px; line-height: 20px; white-space: nowrap; color: #e8eaed; }
.ime { font-family: "Liberation Serif", serif; font-size: 10px; }
.clock { display: flex; flex-direction: column; align-items: center; line-height: 10px; width: 38px; }
.notice { padding-right: 11px; }
```

FILE: sheet.js
```js
const columns = [
  ["A", 40], ["B", 39], ["C", 40], ["D", 45], ["E", 44], ["F", 45], ["G", 45],
  ["H", 45], ["I", 45], ["J", 46], ["K", 40], ["L", 37], ["M", 38], ["N", 40],
  ["O", 40], ["P", 40], ["Q", 40], ["R", 40], ["S", 40], ["T", 40], ["", 0],
];
const rowCount = 29;

// Blocks of cell text, each keyed by its top-left cell.
const blocks = {
  A1: `都道府県 店舗名 担当者 商品A個数 商品A合計 商品B個数 商品B合計 商品C個数 商品C合計 総合計
東京 店舗A 田中 19 22800 13 19500 10 20000 62300
東京 店舗B 山田 17 20400 10 15000 7 14000 49400
東京 店舗C 鈴木 18 21600 13 19500 5 10000 51100
大阪 店舗A 山本 15 18000 6 9000 9 18000 45000
大阪 店舗B 佐藤 16 19200 10 15000 4 8000 42200
大阪 店舗C 大田 13 15600 7 10500 5 10000 36100
福岡 店舗A 井上 15 18000 8 12000 4 8000 38000
福岡 店舗B 高橋 11 13200 4 6000 8 16000 35200
福岡 店舗C 渡辺 14 16800 8 12000 5 10000 38800
東京 店舗A 鈴木 16 19200 12 18000 3 6000 43200
東京 店舗B 田中 15 18000 7 10500 7 14000 42500
東京 店舗C 山田 14 16800 9 13500 3 6000 36300
大阪 店舗A 佐藤 15 18000 4 6000 8 16000 40000
大阪 店舗B 大田 14 16800 6 9000 6 12000 37800
大阪 店舗C 山本 13 15600 8 12000 4 8000 35600
福岡 店舗A 高橋 16 19200 4 6000 7 14000 39200
福岡 店舗B 渡辺 19 22800 5 7500 5 10000 40300
福岡 店舗C 井上 17 20400 6 9000 6 12000 41400`,
  L1: `商品名 単価
商品A 1200
商品B 1500
商品C 2000`,
  L6: `都道府県 店舗名 担当者`,
  L7: `東京`,
  L10: `大阪`,
  L13: `福岡`,
  M7: `店舗A 田中
店舗B 山田
店舗C 鈴木
店舗A 山本
店舗B 佐藤
店舗C 大田
店舗A 井上
店舗B 高橋
店舗C 渡辺`,
  A21: `都道府県 店舗名 合計
東京 店舗A 105500`,
  A24: `都道府県 店舗名 担当者 合計
東京 店舗A 田中`,
};

// Bordered ranges: first column, first row, last column, last row, header fill.
const ranges = [
  [0, 1, 9, 19, "blue"],
  [11, 1, 12, 4, "orange"],
  [11, 6, 13, 15, "gray"],
  [0, 21, 2, 22, "yellow"],
  [0, 24, 3, 25, "sky"],
];

const values = {};
for (const [start, text] of Object.entries(blocks)) {
  const left = start.charCodeAt(0) - 65;
  const top = Number(start.slice(1));
  text.split("\n").forEach((line, r) => {
    line.split(" ").forEach((value, c) => { values[`${left + c},${top + r}`] = value; });
  });
}

const rangeAt = (c, r) => ranges.find(([c0, r0, c1, r1]) => c >= c0 && c <= c1 && r >= r0 && r <= r1);

function addCell(row, tag, text, classes) {
  const cell = document.createElement(tag);
  cell.textContent = text;
  cell.className = classes.join(" ");
  row.append(cell);
  return cell;
}

const grid = document.getElementById("grid");
const headRow = grid.createTHead().insertRow();
addCell(headRow, "th", "", ["corner", "col-head"]);
for (const [name, width] of columns) {
  const classes = width ? [`w${width}`] : [];
  if (name === "C") classes.push("selected");
  addCell(headRow, "th", name, classes);
}

const body = grid.createTBody();
for (let r = 1; r <= rowCount; r++) {
  const row = body.insertRow();
  addCell(row, "th", r, r === 23 ? ["selected"] : []);
  for (let c = 0; c < columns.length; c++) {
    const inMerge = c === 11 && r >= 7 && r <= 15;
    if (inMerge && (r - 7) % 3) continue;
    const value = values[`${c},${r}`] || "";
    const range = rangeAt(c, r);
    const classes = [];
    if (range || rangeAt(c + 1, r)) classes.push("line-right");
    if (range || rangeAt(c, r + 1)) classes.push("line-bottom");
    if (range && range[1] === r) classes.push(range[4]);
    if (/^\d+$/.test(value)) classes.push("num");
    if (inMerge) classes.push("merged");
    if (c === 2 && r === 23) classes.push("active");
    const cell = addCell(row, "td", value, classes);
    if (inMerge) cell.rowSpan = 3;
  }
}
```
